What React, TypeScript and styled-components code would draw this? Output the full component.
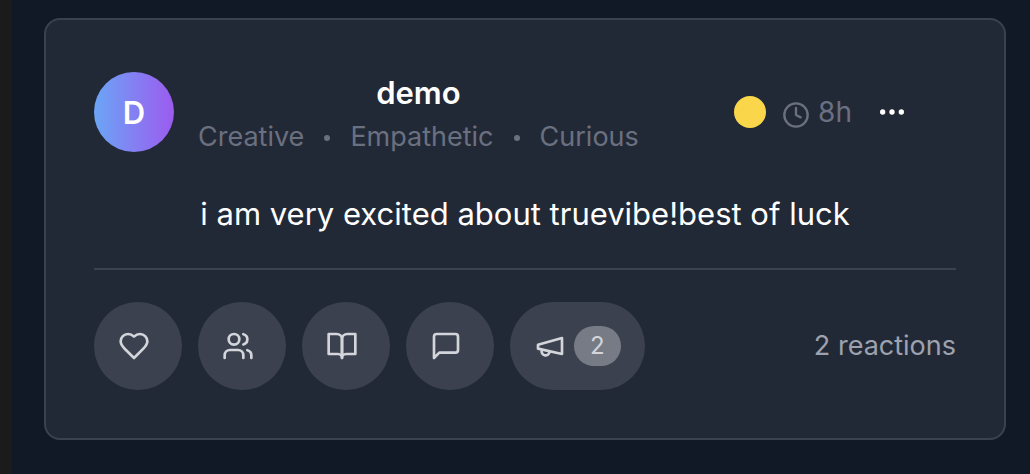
import React from "react";
import styled, { createGlobalStyle } from "styled-components";

const GlobalStyle = createGlobalStyle`
  *, *::before, *::after { box-sizing: border-box; }
  body {
    margin: 0;
    background: #121926;
    font-family: Inter, "Liberation Sans", sans-serif;
    -webkit-font-smoothing: antialiased;
  }
  button { font: inherit; color: inherit; border: 0; cursor: pointer; }
  h2, p, ul { margin: 0; padding: 0; }
`;

const Page = styled.main`
  min-height: 100vh;
  padding: 18px 24px 32px 32px;
  border-left: 12px solid #1b1b1b;
  background: #121926;
`;

const Card = styled.article`
  padding: 48px;
  border: 2px solid #3b414f;
  border-radius: 16px;
  background: #222936;
`;

const Header = styled.header`
  display: flex;
  align-items: center;
  justify-content: space-between;
`;

const Author = styled.div`
  display: flex;
  align-items: center;
  gap: 24px;
`;

const Avatar = styled.div`
  display: flex;
  align-items: center;
  justify-content: center;
  width: 80px;
  height: 80px;
  border-radius: 50%;
  background: linear-gradient(to right, #6ba5f6, #9c5bef);
  color: #fff;
  font-size: 31px;
  font-weight: 600;
`;

const Name = styled.h2`
  color: #fff;
  font-size: 31px;
  font-weight: 600;
  line-height: 50px;
  text-align: center;
`;

const Traits = styled.ul`
  display: flex;
  gap: 16px;
  color: #6b7080;
  font-size: 27px;
  line-height: 38px;
  list-style: none;
`;

const Trait = styled.li`
  display: flex;
  align-items: center;
  gap: 16px;

  & + &::before {
    content: "";
    width: 6px;
    height: 6px;
    margin: 2px 4px 0;
    border-radius: 50%;
    background: currentColor;
  }
`;

const Meta = styled.div`
  display: flex;
  align-items: center;
`;

const Mood = styled.span`
  width: 32px;
  height: 32px;
  margin-right: 16px;
  border-radius: 50%;
  background: #fad74a;
`;

const Time = styled.time`
  display: flex;
  align-items: center;
  gap: 8px;
  color: #6b7080;
  font-size: 28px;
  line-height: 40px;

  svg { margin-top: 6px; }
`;

const MenuButton = styled.button`
  display: flex;
  padding: 16px 48px 16px 24px;
  background: none;
  color: #fff;
`;

const Message = styled.p`
  margin: 32px 0 28px;
  color: #fff;
  font-size: 31px;
  line-height: 52px;
  text-align: center;
`;

const Footer = styled.footer`
  display: flex;
  align-items: center;
  justify-content: space-between;
  padding-top: 32px;
  border-top: 2px solid #3b414f;
`;

const Reactions = styled.div`
  display: flex;
  gap: 16px;
`;

const ReactionButton = styled.button`
  display: flex;
  align-items: center;
  gap: 8px;
  height: 88px;
  padding: 0 24px;
  border-radius: 44px;
  background: #3b414f;
  color: #d3d5db;

  &:not(:has(span)) { padding-right: 32px; }
`;

const Count = styled.span`
  padding: 4px 16px;
  border-radius: 20px;
  background: #777b85;
  font-size: 24px;
  line-height: 32px;
`;

const Total = styled.p`
  color: #9da2ae;
  font-size: 27px;
  line-height: 40px;
`;

type IconProps = { size?: number; children: React.ReactNode };

const Icon = ({ size = 32, children }: IconProps) => (
  <svg
    width={size}
    height={size}
    viewBox="0 0 24 24"
    fill="none"
    stroke="currentColor"
    strokeWidth="2"
    strokeLinecap="round"
    strokeLinejoin="round"
    aria-hidden="true"
  >
    {children}
  </svg>
);

const reactions = [
  {
    label: "Love",
    icon: <path d="M19 14c1.49-1.46 3-3.21 3-5.5A5.5 5.5 0 0 0 16.5 3c-1.76 0-3 .5-4.5 2-1.5-1.5-2.74-2-4.5-2A5.5 5.5 0 0 0 2 8.5c0 2.3 1.5 4.05 3 5.5l7 7Z" />,
  },
  {
    label: "Relate",
    icon: (
      <>
        <path d="M16 21v-2a4 4 0 0 0-4-4H6a4 4 0 0 0-4 4v2" />
        <circle cx="9" cy="7" r="4" />
        <path d="M22 21v-2a4 4 0 0 0-3-3.87" />
        <path d="M16 3.13a4 4 0 0 1 0 7.75" />
      </>
    ),
  },
  {
    label: "Learn",
    icon: (
      <>
        <path d="M2 3h6a4 4 0 0 1 4 4v14a3 3 0 0 0-3-3H2z" />
        <path d="M22 3h-6a4 4 0 0 0-4 4v14a3 3 0 0 1 3-3h7z" />
      </>
    ),
  },
  {
    label: "Comment",
    icon: <path d="M21 15a2 2 0 0 1-2 2H7l-4 4V5a2 2 0 0 1 2-2h14a2 2 0 0 1 2 2z" />,
  },
  {
    label: "Amplify",
    count: 2,
    icon: (
      <>
        <path d="m3 11 18-5v12L3 14v-3z" />
        <path d="M11.6 16.8a3 3 0 1 1-5.8-1.6" />
      </>
    ),
  },
];

export default function App() {
  return (
    <>
      <GlobalStyle />
      <Page>
        <Card>
          <Header>
            <Author>
              <Avatar>D</Avatar>
              <div>
                <Name>demo</Name>
                <Traits>
                  <Trait>Creative</Trait>
                  <Trait>Empathetic</Trait>
                  <Trait>Curious</Trait>
                </Traits>
              </div>
            </Author>
            <Meta>
              <Mood />
              <Time>
                <Icon size={28}>
                  <circle cx="12" cy="12" r="10" />
                  <path d="M12 6v6l4 2" />
                </Icon>
                8h
              </Time>
              <MenuButton aria-label="More options">
                <Icon>
                  <circle cx="12" cy="12" r="1" />
                  <circle cx="19" cy="12" r="1" />
                  <circle cx="5" cy="12" r="1" />
                </Icon>
              </MenuButton>
            </Meta>
          </Header>
          <Message>i am very excited about truevibe!best of luck</Message>
          <Footer>
            <Reactions>
              {reactions.map(({ label, icon, count }) => (
                <ReactionButton key={label} aria-label={label}>
                  <Icon>{icon}</Icon>
                  {count && <Count>{count}</Count>}
                </ReactionButton>
              ))}
            </Reactions>
            <Total>2 reactions</Total>
          </Footer>
        </Card>
      </Page>
    </>
  );
}
